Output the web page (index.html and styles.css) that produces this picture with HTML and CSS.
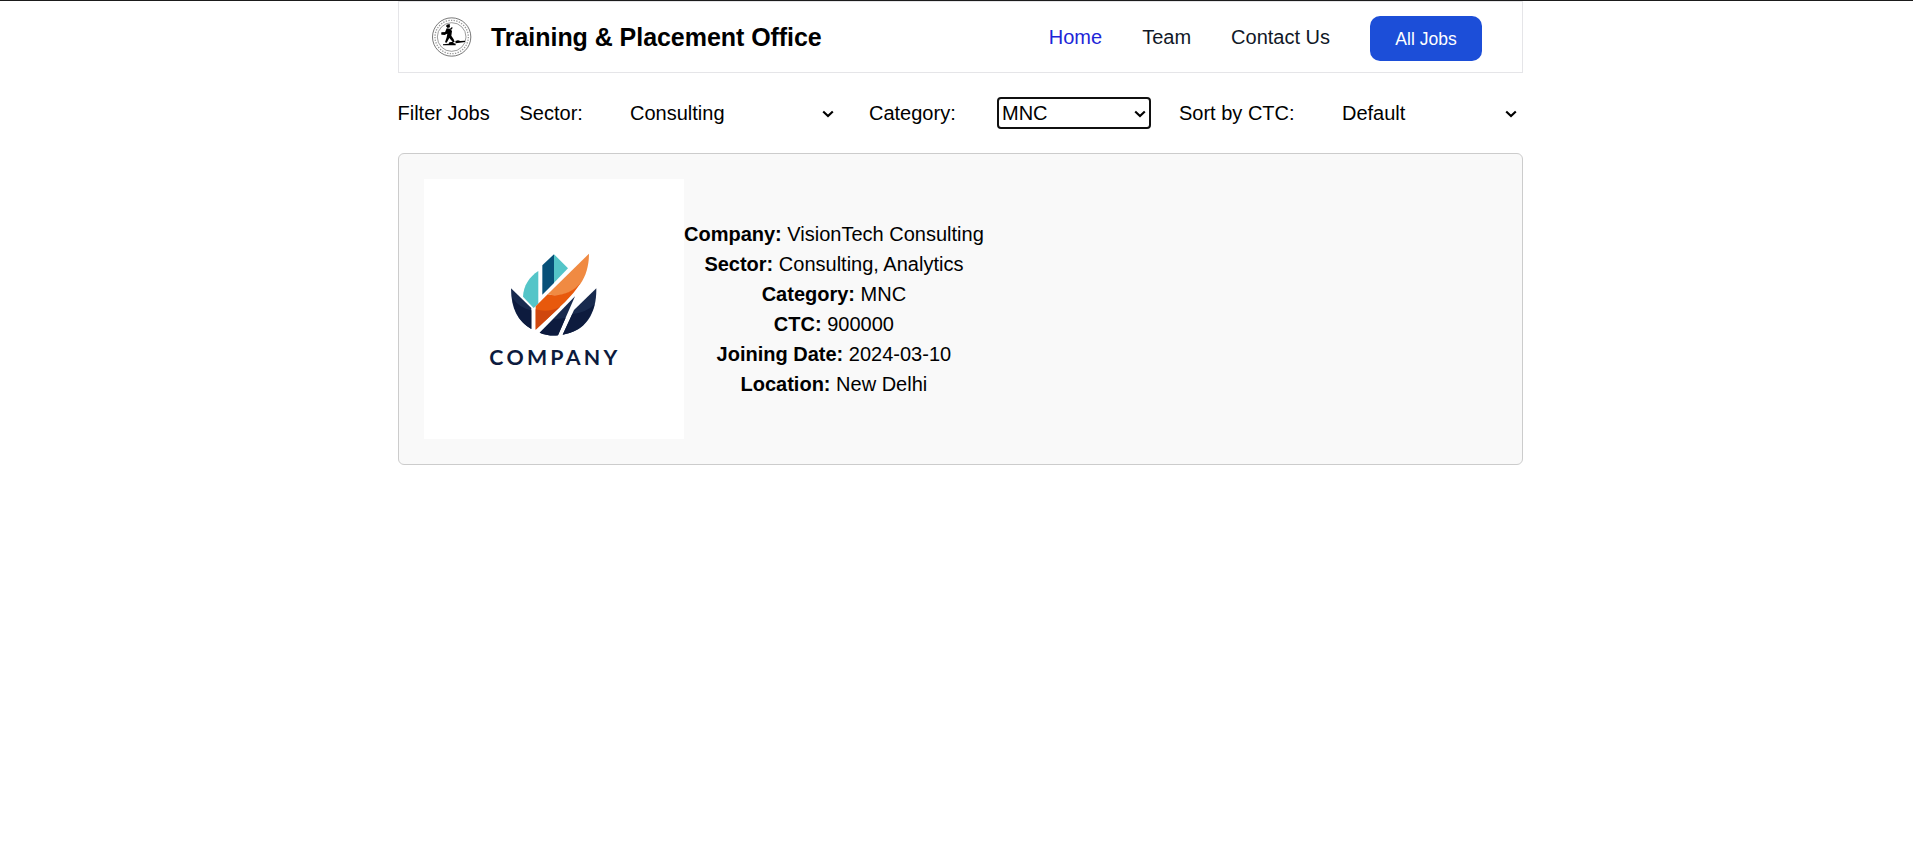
FILE: index.html
```html
<!DOCTYPE html>
<html lang="en">
<head>
<meta charset="utf-8">
<title>Training &amp; Placement Office</title>
<link rel="stylesheet" href="styles.css">
</head>
<body>
<div class="container">
  <header class="header">
    <svg class="seal" viewBox="0 0 120 120" aria-hidden="true">
      <g fill="none" stroke="#444">
        <circle cx="59" cy="60" r="57.5" stroke-width="2.2"/>
        <circle cx="59" cy="60" r="50" stroke-width="4" stroke="#999" stroke-dasharray="4 4"/>
        <circle cx="59" cy="60" r="43" stroke-width="1.6"/>
      </g>
      <g fill="#000">
        <path d="M44 23l9 -2 1 10-7 2-5-5zM44 34l10 1 6 7-2 14 7 11 3 8-5 1-11-13-8 14-5-1 5-15 2-11-8 3-9-2 1-4 9-1z"/>
        <path d="M28 46h12v7H28zM54 35l6-5 2 3-5 6zM33 82l17-2 2-4 12-2v4l7 2v5H33zM70 72l8-2 7 2 14-1v4l-16 2-12 2z"/>
      </g>
    </svg>
    <h1 class="title">Training &amp; Placement Office</h1>
    <nav class="nav">
      <a class="nav-link active">Home</a>
      <a class="nav-link">Team</a>
      <a class="nav-link">Contact Us</a>
    </nav>
    <button class="jobs-button">All Jobs</button>
  </header>

  <div class="filters">
    <span class="filter-heading">Filter Jobs</span>
    <label class="label-sector" for="sector">Sector:</label>
    <div class="select select-sector">
      <select id="sector"><option>Consulting</option></select>
      <svg class="chevron" viewBox="0 0 12 8"><path d="M1.2 1.4L6 6.1l4.8-4.7"/></svg>
    </div>
    <label class="label-category" for="category">Category:</label>
    <div class="select select-category focused">
      <select id="category"><option>MNC</option></select>
      <svg class="chevron" viewBox="0 0 12 8"><path d="M1.2 1.4L6 6.1l4.8-4.7"/></svg>
    </div>
    <label class="label-sort" for="sort">Sort by CTC:</label>
    <div class="select select-sort">
      <select id="sort"><option>Default</option></select>
      <svg class="chevron" viewBox="0 0 12 8"><path d="M1.2 1.4L6 6.1l4.8-4.7"/></svg>
    </div>
  </div>

  <article class="card">
    <svg class="company-logo" viewBox="-168 -183 780 780" role="img" aria-label="Company logo">
      <path fill="#54c5c8" d="M175 93V191L161 204 129 170C130 138 148 110 175 93z"/>
      <path fill="#075078" d="M187 76L222 43V129L187 164z"/>
      <path fill="#54c5c8" d="M222 43L264 85 222 128z"/>
      <path fill="#f08a42" d="M327 41C327 78 317 109 301 132 270 166 235 170 203 163z"/>
      <path fill="#e8590c" d="M203 163C240 172 277 157 301 130 288 151 273 168 256 185L167 269V199z"/>
      <path fill="#cf470e" d="M167 208C191 215 216 213 241 200L167 269z"/>
      <path fill="#182a4e" d="M93 145L154 204V267C115 246 93 208 93 145z"/>
      <path fill="#0d1b3e" d="M97 174Q121 206 154 211V267C123 249 102 219 97 174z"/>
      <path fill="#182a4e" d="M285 169L234 286C212 288 194 284 179 278z"/>
      <path fill="#0d1b3e" d="M222 237Q239 237 257 233L234 286C212 288 194 284 179 278z"/>
      <path fill="#182a4e" d="M349 145C350 224 315 274 248 284L282 210z"/>
      <path fill="#0d1b3e" d="M277 222Q316 220 344 193C329 246 298 277 248 284z"/>
      <text class="logo-text" x="28" y="375" textLength="384">COMPANY</text>
    </svg>
    <div class="details">
      <p><strong>Company:</strong> VisionTech Consulting</p>
      <p><strong>Sector:</strong> Consulting, Analytics</p>
      <p><strong>Category:</strong> MNC</p>
      <p><strong>CTC:</strong> 900000</p>
      <p><strong>Joining Date:</strong> 2024-03-10</p>
      <p><strong>Location:</strong> New Delhi</p>
    </div>
  </article>
</div>
</body>
</html>
```
FILE: styles.css
```css
* { box-sizing: border-box; }

body {
  margin: 0;
  border-top: 1px solid #1b1b1b;
  background: #fff;
  color: #000;
  font: 20px/30px "Liberation Sans", Arial, sans-serif;
}

.container {
  width: 1125px;
  margin-left: 398px;
}

.header {
  display: flex;
  align-items: center;
  height: 72px;
  padding: 0 40px 0 33px;
  border: 1px solid #e5e5e8;
}

.seal {
  width: 40px;
  height: 40px;
  flex: none;
}

.title {
  margin: 0 0 0 19px;
  font-size: 25px;
  line-height: 35px;
  letter-spacing: -0.05px;
  white-space: nowrap;
}

.nav {
  display: flex;
  gap: 40px;
  margin-left: auto;
  white-space: nowrap;
}

.nav-link { color: #111827; }
.nav-link.active { color: #1d25d8; }

.jobs-button {
  width: 112px;
  height: 45px;
  margin: 2px 0 0 40px;
  padding: 2px 0 0;
  border: 0;
  border-radius: 10px;
  background: #1c4ed8;
  color: #fff;
  font: 17.5px/25px "Liberation Sans", Arial, sans-serif;
}

.filters {
  display: flex;
  align-items: center;
  height: 32px;
  margin: 24px 0;
  white-space: nowrap;
}

.filter-heading { width: 122px; margin-left: -0.5px; }
.label-sector { width: 105.5px; }
.label-category { width: 128px; }
.label-sort { width: 158px; }

.select {
  display: flex;
  align-items: center;
  height: 32px;
  padding: 0 5px;
  border-radius: 4px;
}

.select-sector { width: 214px; margin-right: 30px; }
.select-category { width: 154px; margin-right: 28px; }
.select-sort { width: 185px; }
.focused { border: 2px solid #101010; padding: 0 3px; }

.select select {
  flex: 1;
  min-width: 0;
  padding: 0;
  border: 0;
  outline: 0;
  appearance: none;
  background: transparent;
  color: #000;
  font: inherit;
}

.chevron {
  width: 12px;
  height: 8px;
  flex: none;
  margin-top: 1px;
  fill: none;
  stroke: #000;
  stroke-width: 2.1;
}

.card {
  display: flex;
  align-items: center;
  height: 312px;
  padding: 25px;
  border: 1px solid #ccc;
  border-radius: 6px;
  background: #f9f9f9;
}

.company-logo {
  width: 260px;
  height: 260px;
  flex: none;
  background: #fff;
}

.logo-text {
  font: bold 64px Lato, sans-serif;
  fill: #0d1b3e;
}

.details { text-align: center; }
.details p { margin: 0; }
```
